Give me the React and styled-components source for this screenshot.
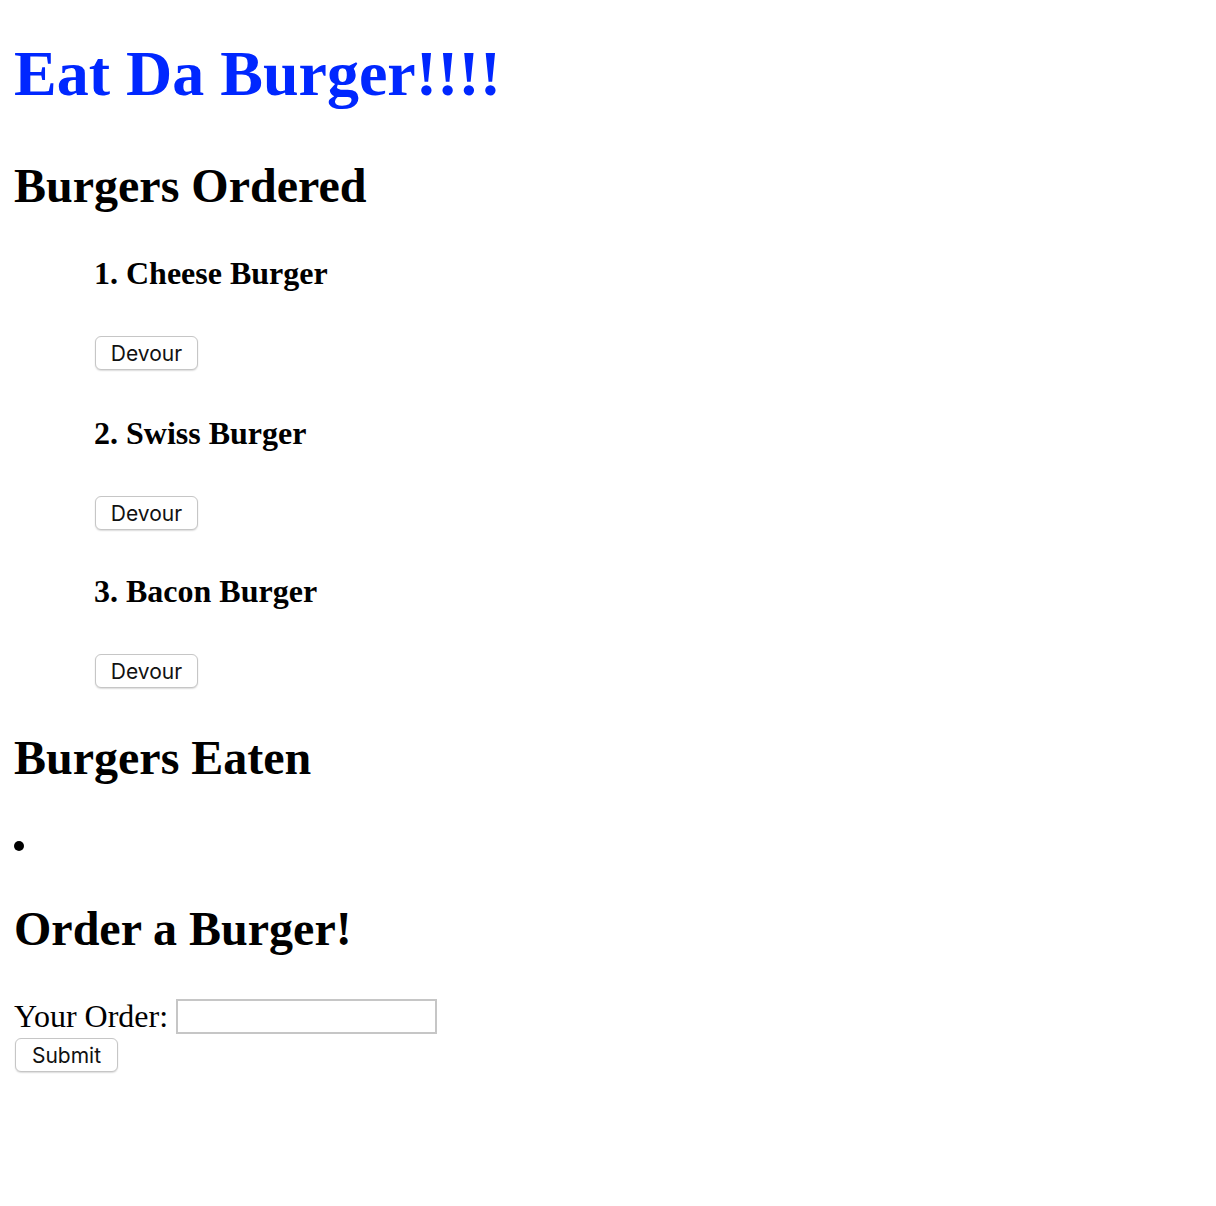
import styled, { createGlobalStyle } from "styled-components";

const GlobalStyle = createGlobalStyle`
  body {
    margin: 0;
    background: #fff;
    color: #000;
    font-family: "Liberation Serif", "Times New Roman", serif;
  }
`;

const Page = styled.div`
  padding: 0 14px 60px;
  display: flow-root;
`;

const Title = styled.h1`
  margin: 37px 0 0;
  font-size: 64px;
  line-height: 74px;
  font-weight: bold;
  color: #0027ff;
`;

const SectionTitle = styled.h2`
  margin: ${p => p.$top}px 0 0;
  font-size: 48px;
  line-height: 55px;
  font-weight: bold;
`;

const BurgerList = styled.ul`
  list-style: none;
  margin: 0;
  padding: 0 0 0 80px;
`;

const BurgerItem = styled.li`
  display: flex;
  flex-direction: column;
  align-items: flex-start;
`;

const BurgerName = styled.h4`
  margin: ${p => p.$top}px 0 0;
  font-size: 32px;
  line-height: 37px;
  font-weight: bold;
`;

const Button = styled.button`
  margin: ${p => p.$top || 0}px 0 0 1px;
  height: 34px;
  width: 103px;
  padding: 0;
  background: #fff;
  border: 1px solid #c6c6c6;
  border-radius: 6px;
  box-shadow: 0 1px 1.5px rgba(0, 0, 0, 0.14);
  font-family: Inter, "Liberation Sans", sans-serif;
  font-size: 21px;
  color: #111;
  cursor: pointer;
`;

const EatenList = styled.ul`
  margin: 41px 0 0;
  padding: 0;
  list-style: disc inside;
`;

const EatenItem = styled.li`
  font-size: 32px;
  line-height: 37px;
  min-height: 37px;
`;

const Form = styled.form`
  margin-top: 42px;
  display: flex;
  flex-direction: column;
  align-items: flex-start;
  gap: 3px;
`;

const FormRow = styled.div`
  display: flex;
  align-items: center;
  gap: 8px;
  height: 37px;
`;

const Label = styled.label`
  font-size: 32px;
  line-height: 37px;
`;

const Input = styled.input`
  box-sizing: border-box;
  width: 261px;
  height: 35px;
  border: 2px solid #c6c6c6;
  border-radius: 0;
  padding: 0 6px;
  font-size: 22px;
  outline: none;
`;

const burgers = ["Cheese Burger", "Swiss Burger", "Bacon Burger"];
const nameGaps = [42, 45, 43];

const App = () => (
  <Page>
    <GlobalStyle />
    <Title>Eat Da Burger!!!!</Title>
    <SectionTitle $top={47}>Burgers Ordered</SectionTitle>
    <BurgerList>
      {burgers.map((name, i) => (
        <BurgerItem key={name}>
          <BurgerName $top={nameGaps[i]}>{i + 1}. {name}</BurgerName>
          <Button $top={44}>Devour</Button>
        </BurgerItem>
      ))}
    </BurgerList>
    <SectionTitle $top={42}>Burgers Eaten</SectionTitle>
    <EatenList>
      <EatenItem />
    </EatenList>
    <SectionTitle $top={38}>Order a Burger!</SectionTitle>
    <Form onSubmit={e => e.preventDefault()}>
      <FormRow>
        <Label htmlFor="burger">Your Order:</Label>
        <Input id="burger" type="text" name="burger" />
      </FormRow>
      <Button type="submit">Submit</Button>
    </Form>
  </Page>
);

export default App;
